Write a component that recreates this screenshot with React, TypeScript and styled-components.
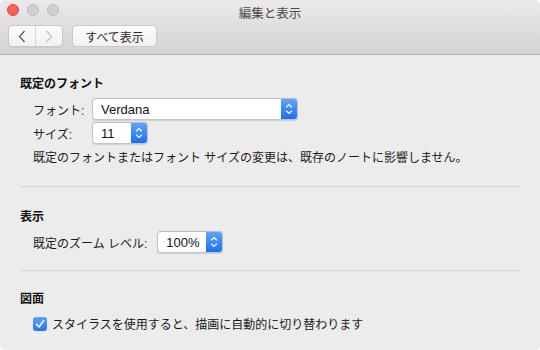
import React from "react";
import styled, { createGlobalStyle } from "styled-components";

const GlobalStyle = createGlobalStyle`
  html, body {
    margin: 0;
    padding: 0;
    background: #ffffff;
  }
  body {
    font-family: "Liberation Sans", "Noto Sans CJK JP", sans-serif;
    -webkit-font-smoothing: antialiased;
  }
`;

const Window = styled.div`
  width: 540px;
  height: 350px;
  border-radius: 5px;
  overflow: hidden;
  background: #ececec;
  display: flex;
  flex-direction: column;
`;

const TitleBar = styled.div`
  height: 54px;
  border-bottom: 1px solid #b3b3b3;
  background: linear-gradient(180deg, #ebe9eb 0%, #d4d2d4 100%);
  display: flex;
  flex-direction: column;
`;

const TopRow = styled.div`
  height: 22px;
  display: grid;
  grid-template-columns: 1fr auto 1fr;
  align-items: center;
`;

const Lights = styled.div`
  display: flex;
  gap: 8px;
  padding: 0 0 0 7px;
  margin-top: -2px;
`;

const Light = styled.span<{ $color: string; $edge: string }>`
  width: 12px;
  height: 12px;
  border-radius: 50%;
  box-sizing: border-box;
  background: ${(p) => p.$color};
  border: 0.5px solid ${(p) => p.$edge};
`;

const WindowTitle = styled.div`
  font-size: 12.5px;
  color: #4a4a4a;
  margin-top: 2px;
`;

const Toolbar = styled.div`
  display: flex;
  align-items: center;
  gap: 9px;
  padding: 3px 0 0 8px;
`;

const Segmented = styled.div`
  display: flex;
  height: 22px;
  box-sizing: border-box;
  border: 1px solid #c9c9c9;
  border-radius: 4px;
  background: linear-gradient(180deg, #fcfcfc 0%, #f1f1f1 100%);
  box-shadow: 0 0.5px 0 rgba(0, 0, 0, 0.08);
`;

const NavButton = styled.div<{ $divider?: boolean }>`
  width: 26px;
  display: flex;
  align-items: center;
  justify-content: center;
  border-right: ${(p) => (p.$divider ? "1px solid #d6d6d6" : "none")};
`;

const ToolButton = styled.div`
  width: 85px;
  height: 22px;
  box-sizing: border-box;
  border: 1px solid #c9c9c9;
  border-radius: 4px;
  background: linear-gradient(180deg, #fcfcfc 0%, #f1f1f1 100%);
  display: flex;
  align-items: center;
  justify-content: center;
  font-size: 12px;
  color: #2a2a2a;
`;

const Content = styled.div`
  padding: 21px 20px 0 20px;
  display: flex;
  flex-direction: column;
`;

const Heading = styled.div<{ $top?: number }>`
  font-size: 12px;
  font-weight: bold;
  line-height: 16px;
  color: #111;
  margin-top: ${(p) => p.$top ?? 0}px;
`;

const Row = styled.div<{ $top: number; $labelWidth?: number }>`
  display: flex;
  align-items: center;
  margin-top: ${(p) => p.$top}px;
  padding-left: 13px;
`;

const Label = styled.span<{ $width?: number }>`
  font-size: 12px;
  color: #1a1a1a;
  width: ${(p) => (p.$width ? `${p.$width}px` : "auto")};
  margin-right: ${(p) => (p.$width ? 0 : 10)}px;
  flex-shrink: 0;
`;

const Note = styled.div`
  font-size: 12px;
  line-height: 16px;
  color: #1a1a1a;
  margin-top: 6px;
  padding-left: 13px;
`;

const Separator = styled.hr<{ $top: number }>`
  border: none;
  height: 1px;
  background: #d5d5d5;
  margin: ${(p) => p.$top}px 0 0 0;
`;

const Popup = styled.div<{ $width: number }>`
  width: ${(p) => p.$width}px;
  height: 22px;
  box-sizing: border-box;
  border: 1px solid #c4c4c4;
  border-top-color: #bdbdbd;
  border-radius: 4px;
  background: #ffffff;
  display: flex;
  align-items: stretch;
  overflow: hidden;
  box-shadow: 0 0.5px 1px rgba(0, 0, 0, 0.12);
`;

const PopupValue = styled.span`
  flex: 1;
  display: flex;
  align-items: center;
  padding-left: 8px;
  font-size: 13px;
  color: #111;
`;

const Stepper = styled.span`
  width: 16px;
  background: linear-gradient(180deg, #5ca6fe 0%, #1c6ff6 100%);
  display: flex;
  align-items: center;
  justify-content: center;
`;

const CheckRow = styled.label`
  display: flex;
  align-items: center;
  gap: 5px;
  margin-top: 8px;
  padding-left: 13px;
  font-size: 12px;
  color: #1a1a1a;
`;

const CheckBox = styled.span`
  width: 14px;
  height: 14px;
  border-radius: 3px;
  background: linear-gradient(180deg, #5aa4fe 0%, #2274f7 100%);
  display: flex;
  align-items: center;
  justify-content: center;
`;

const Arrows = () => (
  <svg width="8" height="12" viewBox="0 0 8 12">
    <path d="M1.2 4.2 L4 1.6 L6.8 4.2 M1.2 7.8 L4 10.4 L6.8 7.8" fill="none" stroke="#fff" strokeWidth="1.3" />
  </svg>
);

const Chevron = ({ dir, color }: { dir: "left" | "right"; color: string }) => (
  <svg width="8" height="13" viewBox="0 0 8 13">
    <path
      d={dir === "left" ? "M6.5 1 L1.5 6.5 L6.5 12" : "M1.5 1 L6.5 6.5 L1.5 12"}
      fill="none"
      stroke={color}
      strokeWidth="1.3"
    />
  </svg>
);

const Check = () => (
  <svg width="10" height="10" viewBox="0 0 10 10">
    <path d="M1.6 5.4 L4 8 L8.6 1.6" fill="none" stroke="#fff" strokeWidth="1.6" strokeLinecap="round" strokeLinejoin="round" />
  </svg>
);

const Select = ({ width, value }: { width: number; value: string }) => (
  <Popup $width={width}>
    <PopupValue>{value}</PopupValue>
    <Stepper>
      <Arrows />
    </Stepper>
  </Popup>
);

const App = () => {
  return (
    <>
      <GlobalStyle />
      <Window>
        <TitleBar>
          <TopRow>
            <Lights>
              <Light $color="#fc5f57" $edge="#e0443e" />
              <Light $color="#d0cfd0" $edge="#bdbcbd" />
              <Light $color="#d0cfd0" $edge="#bdbcbd" />
            </Lights>
            <WindowTitle>編集と表示</WindowTitle>
            <div />
          </TopRow>
          <Toolbar>
            <Segmented>
              <NavButton $divider>
                <Chevron dir="left" color="#5b5b5b" />
              </NavButton>
              <NavButton>
                <Chevron dir="right" color="#c4c4c4" />
              </NavButton>
            </Segmented>
            <ToolButton>すべて表示</ToolButton>
          </Toolbar>
        </TitleBar>
        <Content>
          <Heading>既定のフォント</Heading>
          <Row $top={6}>
            <Label $width={59}>フォント:</Label>
            <Select width={206} value="Verdana" />
          </Row>
          <Row $top={2}>
            <Label $width={59}>サイズ:</Label>
            <Select width={56} value="11" />
          </Row>
          <Note>既定のフォントまたはフォント サイズの変更は、既存のノートに影響しません。</Note>
          <Separator $top={20} />
          <Heading $top={22}>表示</Heading>
          <Row $top={6}>
            <Label>既定のズーム レベル:</Label>
            <Select width={66} value="100%" />
          </Row>
          <Separator $top={17} />
          <Heading $top={20}>図面</Heading>
          <CheckRow>
            <CheckBox>
              <Check />
            </CheckBox>
            スタイラスを使用すると、描画に自動的に切り替わります
          </CheckRow>
        </Content>
      </Window>
    </>
  );
};

export default App;
